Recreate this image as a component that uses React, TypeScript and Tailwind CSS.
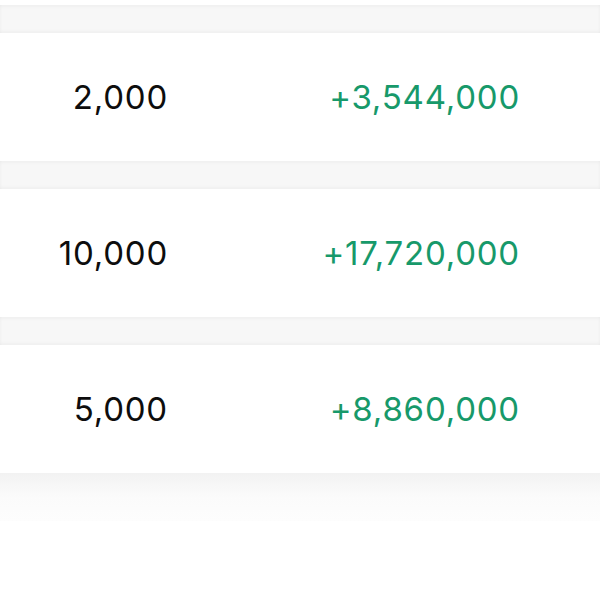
import React from "react";

const rows = [
  { qty: "2,000", val: "+3,544,000" },
  { qty: "10,000", val: "+17,720,000" },
  { qty: "5,000", val: "+8,860,000" },
];

function Sep() {
  return (
    <div className="h-[28px] bg-[#f7f7f7] shadow-[inset_0_2px_3px_rgba(0,0,0,0.03),inset_0_-2px_3px_rgba(0,0,0,0.03)]" />
  );
}

export default function App() {
  return (
    <div
      className="w-[600px] h-[600px] bg-white overflow-hidden"
      style={{ fontFamily: "Inter, 'Liberation Sans', sans-serif" }}
    >
      <div className="h-[5px] bg-white" />
      {rows.map((r, i) => (
        <React.Fragment key={i}>
          <Sep />
          <div className="h-[128px] bg-white flex items-center text-[33px] leading-none tracking-[0.8px]">
            <div className="w-[168px] text-right text-[#0d0d0d]">{r.qty}</div>
            <div className="w-[352px] text-right text-[#17996a]">{r.val}</div>
          </div>
        </React.Fragment>
      ))}
      <div className="h-[48px] bg-gradient-to-b from-[#f2f2f2] via-[#fbfbfb] to-[#fdfdfd]" />
    </div>
  );
}
